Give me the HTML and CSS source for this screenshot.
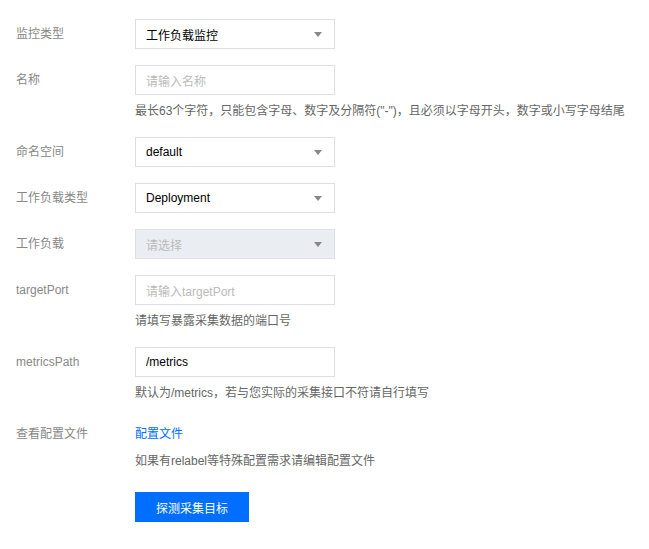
FILE: index.html
```html
<!DOCTYPE html>
<html lang="zh-CN">
<head>
<meta charset="utf-8">
<title>监控配置</title>
<link rel="stylesheet" href="styles.css">
</head>
<body>
<div class="form">
  <div class="row">
    <div class="label">监控类型</div>
    <div class="field">
      <div class="select"><span class="value">工作负载监控</span><span class="caret"></span></div>
    </div>
  </div>
  <div class="row">
    <div class="label">名称</div>
    <div class="field">
      <div class="input"><span class="placeholder">请输入名称</span></div>
      <div class="hint">最长63个字符，只能包含字母、数字及分隔符("-")，且必须以字母开头，数字或小写字母结尾</div>
    </div>
  </div>
  <div class="row">
    <div class="label">命名空间</div>
    <div class="field">
      <div class="select"><span class="value">default</span><span class="caret"></span></div>
    </div>
  </div>
  <div class="row">
    <div class="label">工作负载类型</div>
    <div class="field">
      <div class="select"><span class="value">Deployment</span><span class="caret"></span></div>
    </div>
  </div>
  <div class="row">
    <div class="label">工作负载</div>
    <div class="field">
      <div class="select disabled"><span class="placeholder">请选择</span><span class="caret"></span></div>
    </div>
  </div>
  <div class="row">
    <div class="label">targetPort</div>
    <div class="field">
      <div class="input"><span class="placeholder">请输入targetPort</span></div>
      <div class="hint">请填写暴露采集数据的端口号</div>
    </div>
  </div>
  <div class="row">
    <div class="label">metricsPath</div>
    <div class="field">
      <div class="input"><span class="value">/metrics</span></div>
      <div class="hint">默认为/metrics，若与您实际的采集接口不符请自行填写</div>
    </div>
  </div>
  <div class="row row-last">
    <div class="label">查看配置文件</div>
    <div class="field">
      <a class="link" href="#">配置文件</a>
      <div class="hint hint-tight">如果有relabel等特殊配置需求请编辑配置文件</div>
    </div>
  </div>
  <div class="actions">
    <button class="btn" type="button">探测采集目标</button>
  </div>
</div>
</body>
</html>
```

FILE: styles.css
```css
html, body {
  margin: 0;
  padding: 0;
  background: #ffffff;
}

body {
  font-family: "Liberation Sans", "Noto Sans CJK SC", sans-serif;
  font-size: 12px;
  color: #000000;
}

.form {
  padding: 19px 0 0 16px;
}

.row {
  display: flex;
  align-items: flex-start;
  margin-bottom: 16px;
}

.row-last {
  margin-bottom: 21px;
}

.label {
  width: 119px;
  flex: none;
  line-height: 30px;
  color: #888888;
}

.field {
  display: flex;
  flex-direction: column;
  align-items: flex-start;
}

.select,
.input {
  box-sizing: border-box;
  width: 200px;
  height: 30px;
  border: 1px solid #dddfe4;
  background: #ffffff;
  display: flex;
  align-items: center;
  justify-content: space-between;
  padding: 0 10px 0 10px;
}

.select.disabled {
  background: #eaedf1;
  border-color: #dddfe4;
}

.value {
  color: #000000;
}

.placeholder {
  color: #bbbbbb;
}

.caret {
  width: 0;
  height: 0;
  border-left: 4px solid transparent;
  border-right: 4px solid transparent;
  border-top: 5px solid #888888;
  margin-right: 2px;
}

.hint {
  margin-top: 6px;
  line-height: 20px;
  color: #666666;
  white-space: nowrap;
}

.hint-tight {
  margin-top: 2px;
}

.link {
  line-height: 30px;
  color: #006eff;
  text-decoration: none;
}

.actions {
  padding-left: 119px;
}

.btn {
  box-sizing: border-box;
  width: 114px;
  height: 30px;
  border: none;
  background: #006eff;
  color: #ffffff;
  font-family: "Liberation Sans", "Noto Sans CJK SC", sans-serif;
  font-size: 12px;
  padding: 0;
  cursor: pointer;
}
```
